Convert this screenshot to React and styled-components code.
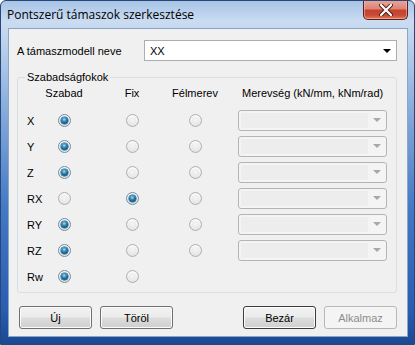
import React from 'react'
import styled, { createGlobalStyle } from 'styled-components'

const Global = createGlobalStyle`
  html, body { margin: 0; padding: 0; background: #fff; }
  body { font-family: "Liberation Sans", Arial, sans-serif; font-size: 11px; color: #000; }
  * { box-sizing: border-box; }
`

const Window = styled.div`
  width: 415px;
  height: 345px;
  display: flex;
  flex-direction: column;
  border-radius: 6px 6px 0 0;
  border: 1px solid #24487a;
  background: linear-gradient(180deg, #a8c4e6 0%, #cadcf1 6%, #bcd2ec 12%, #86abdc 32%, #4479c4 60%, #2a5cb0 90%, #1b4892 100%);
  overflow: hidden;
`
const TitleBar = styled.div`
  height: 27px;
  display: flex;
  align-items: flex-start;
  padding-left: 6px;
`
const Title = styled.div`
  margin-top: 6px;
  font-family: "Open Sans", "Noto Sans", sans-serif;
  font-size: 12px;
  line-height: 16px;
  color: #000;
`
const CloseButton = styled.div`
  margin-left: auto;
  margin-right: 6px;
  margin-top: -1px;
  width: 45px;
  height: 20px;
  border: 1px solid #5a1f1a;
  border-top: none;
  border-radius: 0 0 5px 5px;
  background: linear-gradient(180deg, #e9a89c 0%, #dd8576 45%, #c8412c 55%, #c94a33 80%, #e07b5e 100%);
  box-shadow: inset 0 0 0 1px rgba(255, 200, 190, 0.5);
  display: flex;
  align-items: center;
  justify-content: center;
`
const Client = styled.div`
  flex: 1;
  margin: 0 6px 7px 7px;
  border: 1px solid #8aa4c6;
  background: #f0f0f0;
  padding: 11px 10px 7px 8px;
  display: flex;
  flex-direction: column;
`
const NameRow = styled.div`
  display: flex;
  align-items: center;
  height: 21px;
`
const Label = styled.div`
  width: 127px;
  white-space: nowrap;
`
const Combo = styled.div`
  flex: ${p => (p.$disabled ? 'none' : 1)};
  width: ${p => (p.$disabled ? '149px' : 'auto')};
  height: 21px;
  border: 1px solid ${p => (p.$disabled ? '#b4b4b4' : '#abadb3')};
  border-radius: ${p => (p.$disabled ? '3px' : '0')};
  background: ${p => (p.$disabled ? '#f4f4f4' : '#fff')};
  display: flex;
  align-items: center;
  padding-left: 5px;
  justify-self: end;
`
const ComboText = styled.div`
  flex: 1;
  line-height: 16px;
`
const ComboFace = styled.div`
  flex: 1;
  align-self: stretch;
  margin: 2px 0 2px -3px;
  background: #ededed;
`
const ArrowBox = styled.div`
  width: 18px;
  align-self: stretch;
  display: flex;
  align-items: center;
  justify-content: center;
`
const Arrow = styled.div`
  width: 0;
  height: 0;
  border-left: 4px solid transparent;
  border-right: 4px solid transparent;
  border-top: 4px solid ${p => (p.$disabled ? '#a7a7a7' : '#000')};
`
const Group = styled.fieldset`
  margin: 8px 0 0 0;
  padding: 0 9px 3px 9px;
  border: 1px solid #d5dfe5;
  border-radius: 3px;
  min-width: 0;
`
const Legend = styled.legend`
  padding: 0 2px;
  margin-left: -2px;
  line-height: 16px;
`
const Grid = styled.div`
  display: grid;
  grid-template-columns: 17px 40px 96px 30px minmax(0, 1fr);
  grid-template-rows: 22px repeat(7, 26px);
  align-items: center;
`
const Head = styled.div`
  align-self: start;
  line-height: 16px;
  white-space: nowrap;
  justify-self: ${p => (p.$left ? 'start' : 'center')};
  padding-left: ${p => (p.$left ? '32px' : '0')};
`
const RowLabel = styled.div`
  padding-top: 1px;
`
const RadioCell = styled.div`
  display: flex;
  justify-content: center;
`
const Radio = styled.span`
  position: relative;
  width: 13px;
  height: 13px;
  border-radius: 50%;
  border: 1px solid ${p => (p.$checked ? '#6d8fa8' : '#b0b0b0')};
  background: radial-gradient(circle at 50% 30%, #ffffff 0%, #f3f3f3 45%, #d6d6d6 100%);
  &::after {
    content: '';
    position: absolute;
    inset: 2px;
    border-radius: 50%;
    background: ${p =>
      p.$checked
        ? 'radial-gradient(circle at 45% 35%, #a6e2fb 0%, #3b95c4 30%, #145a85 65%, #0b3c5e 100%)'
        : 'radial-gradient(circle at 50% 40%, #f6f6f6 0%, #e4e4e4 100%)'};
    box-shadow: ${p => (p.$checked ? '0 0 0 0.5px #1c4e70' : 'none')};
  }
`
const ButtonRow = styled.div`
  margin-top: 13px;
  display: flex;
  gap: 8px;
  padding-left: 2px;
`
const Button = styled.div`
  width: 73px;
  height: 23px;
  border: 1px solid ${p => (p.$default ? '#3c3c3c' : p.$disabled ? '#b5b9bc' : '#707070')};
  border-radius: 3px;
  background: ${p =>
    p.$disabled
      ? '#f4f4f4'
      : 'linear-gradient(180deg, #f2f2f2 0%, #ebebeb 48%, #dddddd 52%, #cfcfcf 100%)'};
  box-shadow: inset 0 0 0 1px ${p => (p.$disabled ? '#f4f4f4' : '#fbfbfb')};
  color: ${p => (p.$disabled ? '#8d8d8d' : '#000')};
  display: flex;
  align-items: center;
  justify-content: center;
  line-height: 16px;
  margin-left: ${p => (p.$push ? 'auto' : '0')};
`

const rows = [
  { name: 'X', sel: 0, three: true },
  { name: 'Y', sel: 0, three: true },
  { name: 'Z', sel: 0, three: true },
  { name: 'RX', sel: 1, three: true },
  { name: 'RY', sel: 0, three: true },
  { name: 'RZ', sel: 0, three: true },
  { name: 'Rw', sel: 0, three: false },
]

const App = () => {
  return (
    <>
      <Global />
      <Window>
        <TitleBar>
          <Title>Pontszerű támaszok szerkesztése</Title>
          <CloseButton>
            <svg width="14" height="12" viewBox="0 0 14 12">
              <path d="M2 1 L12 11 M12 1 L2 11" stroke="#4a1d16" strokeWidth="4" strokeLinecap="round" />
              <path d="M2 1 L12 11 M12 1 L2 11" stroke="#fff" strokeWidth="2.2" strokeLinecap="round" />
            </svg>
          </CloseButton>
        </TitleBar>
        <Client>
          <NameRow>
            <Label>A támaszmodell neve</Label>
            <Combo>
              <ComboText>XX</ComboText>
              <ArrowBox>
                <Arrow />
              </ArrowBox>
            </Combo>
          </NameRow>

          <Group>
            <Legend>Szabadságfokok</Legend>
            <Grid>
              <div />
              <Head>Szabad</Head>
              <Head>Fix</Head>
              <Head>Félmerev</Head>
              <Head $left>Merevség (kN/mm, kNm/rad)</Head>
              {rows.map((r) => (
                <React.Fragment key={r.name}>
                  <RowLabel>{r.name}</RowLabel>
                  <RadioCell><Radio $checked={r.sel === 0} /></RadioCell>
                  <RadioCell><Radio $checked={r.sel === 1} /></RadioCell>
                  <RadioCell>{r.three && <Radio $checked={r.sel === 2} />}</RadioCell>
                  {r.three ? (
                    <Combo $disabled>
                      <ComboFace />
                      <ArrowBox>
                        <Arrow $disabled />
                      </ArrowBox>
                    </Combo>
                  ) : (
                    <div />
                  )}
                </React.Fragment>
              ))}
            </Grid>
          </Group>

          <ButtonRow>
            <Button>Új</Button>
            <Button>Töröl</Button>
            <Button $push $default>Bezár</Button>
            <Button $disabled>Alkalmaz</Button>
          </ButtonRow>
        </Client>
      </Window>
    </>
  )
}

export default App
